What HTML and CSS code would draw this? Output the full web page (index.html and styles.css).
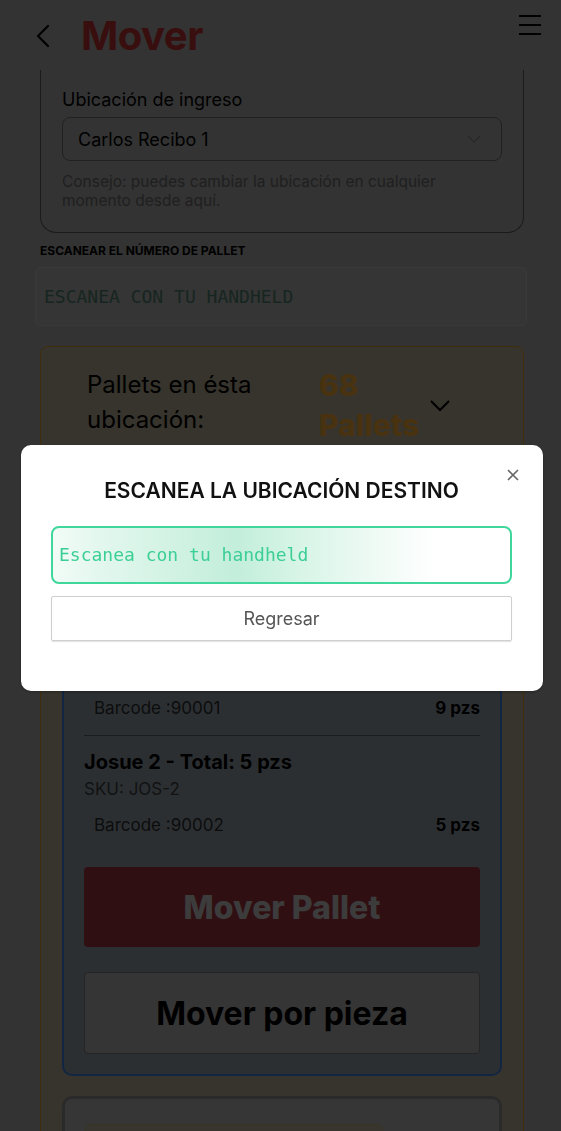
FILE: index.html
```html
<!DOCTYPE html>
<html lang="es">
<head>
  <meta charset="UTF-8" />
  <meta name="viewport" content="width=device-width, initial-scale=1" />
  <title>Mover</title>
  <link rel="stylesheet" href="styles.css">
</head>
<body>
  <header class="topbar">
    <button class="back" aria-label="Regresar">
      <svg width="16" height="24" viewBox="0 0 16 24"><path d="M13 2 L3 12 L13 22" fill="none" stroke="#000" stroke-width="2.2" stroke-linecap="round" stroke-linejoin="round"/></svg>
    </button>
    <h1>Mover</h1>
    <button class="menu" aria-label="Menú">
      <span></span><span></span><span></span>
    </button>
  </header>

  <main class="page">
    <section class="card location">
      <label class="field-label">Ubicación de ingreso</label>
      <div class="select">
        <span>Carlos Recibo 1</span>
        <svg width="14" height="8" viewBox="0 0 14 8"><path d="M1 1 L7 7 L13 1" fill="none" stroke="#888" stroke-width="1.4"/></svg>
      </div>
      <p class="hint">Consejo: puedes cambiar la ubicación en cualquier momento desde aquí.</p>
    </section>

    <div class="scan">
      <div class="scan-label">ESCANEAR EL NÚMERO DE PALLET</div>
      <div class="scan-input">ESCANEA CON TU HANDHELD</div>
    </div>

    <section class="card pallets">
      <div class="pallets-head">
        <div class="pallets-title">Pallets en ésta ubicación:</div>
        <div class="pallets-count">68 Pallets</div>
        <svg class="chev" width="20" height="12" viewBox="0 0 20 12"><path d="M1 1 L10 10 L19 1" fill="none" stroke="#000" stroke-width="2"/></svg>
      </div>

      <div class="pallet open">
        <div class="pallet-head">
          <div class="pallet-name">Pallet PLT-00001</div>
          <div class="pallet-meta">2 productos · 14 pzs</div>
          <div class="pallet-meta">Ubicación: Carlos Recibo 1</div>
        </div>

        <div class="product">
          <div class="product-name">Josue 1 - Total: 9 pzs</div>
          <div class="sku">SKU: JOS-1</div>
          <div class="barcode"><span>Barcode :90001</span><b>9 pzs</b></div>
        </div>
        <div class="product">
          <div class="product-name">Josue 2 - Total: 5 pzs</div>
          <div class="sku">SKU: JOS-2</div>
          <div class="barcode"><span>Barcode :90002</span><b>5 pzs</b></div>
        </div>

        <button class="btn-move">Mover Pallet</button>
        <button class="btn-piece">Mover por pieza</button>
      </div>

      <div class="pallet closed">
        <div class="tag"></div>
      </div>
    </section>
  </main>

  <div class="overlay">
    <div class="modal">
      <button class="close" aria-label="Cerrar">
        <svg width="12" height="12" viewBox="0 0 12 12"><path d="M1 1 L11 11 M11 1 L1 11" stroke="#666" stroke-width="1.6"/></svg>
      </button>
      <h2>ESCANEA LA UBICACIÓN DESTINO</h2>
      <div class="modal-input">Escanea con tu handheld</div>
      <button class="btn-back">Regresar</button>
    </div>
  </div>
</body>
</html>
```

FILE: styles.css
```css
body {
  font-family: Inter, "Noto Sans", sans-serif;
  background: #ababab;
  color: #000;
  margin: 0;
  height: 1131px;
  overflow: hidden;
}
button {
  font-family: inherit;
  background: none;
  border: none;
  padding: 0;
  cursor: pointer;
}

.topbar {
  display: flex;
  align-items: center;
  height: 70px;
  padding: 0 20px 0 35px;
}
.topbar .back {
  display: flex;
  margin-top: 2px;
}
.topbar h1 {
  margin: 0 0 0 30px;
  font-size: 40px;
  font-weight: 700;
  color: #c03030;
  letter-spacing: -0.5px;
}
.menu {
  margin-left: auto;
  align-self: flex-start;
  margin-top: 15px;
  display: flex;
  flex-direction: column;
  gap: 7px;
}
.menu span {
  display: block;
  width: 22px;
  height: 2px;
  background: #000;
}

.page {
  padding: 0 37px 0 40px;
}
.card {
  border: 1px solid #5a5a5a;
  border-radius: 16px;
}
.location {
  border-top: none;
  border-radius: 0 0 16px 16px;
  padding: 18px 21px 22px;
}
.field-label {
  display: block;
  font-size: 18px;
  line-height: 24px;
  margin-bottom: 5px;
}
.select {
  display: flex;
  align-items: center;
  justify-content: space-between;
  height: 42px;
  border: 1px solid #6e6e6e;
  border-radius: 8px;
  padding: 0 20px 0 15px;
  font-size: 18px;
}
.hint {
  margin: 11px 0 0;
  padding-right: 30px;
  font-size: 15.5px;
  line-height: 19px;
  color: #6a6a6a;
}

.scan {
  margin: 10px -3px 0 -5px;
}
.scan-label {
  font-size: 12px;
  font-weight: 700;
  padding-left: 5px;
  margin-bottom: 9px;
}
.scan-input {
  height: 57px;
  border: 1px solid #bcc4c1;
  border-radius: 6px;
  background: #aeb2b0;
  font-family: "DejaVu Sans Mono", monospace;
  font-size: 18px;
  line-height: 57px;
  padding-left: 8px;
  color: #4f7d6e;
}

.pallets {
  margin-top: 20px;
  background: #b6ad93;
  border-color: #d6982a;
  border-radius: 8px;
  padding: 0 21px;
}
.pallets-head {
  display: flex;
  align-items: flex-start;
  padding: 20px 52px 17px 25px;
}
.pallets-title {
  width: 232px;
  font-size: 24px;
  line-height: 35px;
}
.pallets-count {
  width: 110px;
  margin-top: -2px;
  font-size: 30px;
  line-height: 40px;
  font-weight: 800;
  color: #f0a838;
}
.chev {
  margin-left: auto;
  margin-top: 33px;
}

.pallet {
  border-radius: 10px;
  padding: 0 20px;
}
.pallet.open {
  background: #939fa9;
  border: 2px solid #3d7fe0;
  padding-bottom: 20px;
}
.pallet-head {
  padding: 22px 0 53px;
}
.pallet-name {
  font-size: 20px;
  font-weight: 700;
  line-height: 28px;
}
.pallet-meta {
  font-size: 17px;
  line-height: 26px;
}
.product {
  padding: 12px 0 4px;
}
.product + .product {
  border-top: 1px solid #5a5f63;
}
.product-name {
  font-size: 20px;
  font-weight: 700;
  line-height: 28px;
}
.sku {
  font-size: 17px;
  line-height: 26px;
  color: #3a3d40;
}
.barcode {
  display: flex;
  justify-content: space-between;
  padding: 10px 0 10px 10px;
  font-size: 17px;
  line-height: 26px;
  color: #2a2c2e;
}
.barcode b {
  color: #000;
}
.btn-move {
  display: block;
  width: 100%;
  height: 80px;
  margin-top: 15px;
  background: #a2333f;
  border-radius: 4px;
  color: #c8c8c8;
  font-size: 32px;
  font-weight: 800;
}
.btn-piece {
  display: block;
  width: 100%;
  height: 82px;
  margin-top: 25px;
  background: #b2b2b2;
  border: 1px solid #7a7a7a;
  border-radius: 4px;
  color: #000;
  font-size: 32px;
  font-weight: 700;
}
.pallet.closed {
  margin-top: 20px;
  background: #b4b4b4;
  border: 3px solid #8e8e8e;
  padding-top: 25px;
  height: 80px;
}
.tag {
  width: 296px;
  height: 40px;
  border: 1px solid #b9b07a;
  border-radius: 6px;
  background: #b9b39c;
}

.overlay {
  position: fixed;
  inset: 0;
  background: rgba(0, 0, 0, 0.7);
  display: flex;
  align-items: center;
  justify-content: center;
  padding: 4px 18px 0 21px;
}
.modal {
  position: relative;
  flex: 1;
  background: #fff;
  border-radius: 10px;
  padding: 33px 31px 50px 30px;
  box-shadow: 0 1px 3px rgba(0, 0, 0, 0.3);
}
.modal h2 {
  margin: 0 0 22px;
  text-align: center;
  font-size: 21px;
  line-height: 26px;
  font-weight: 600;
  color: #111;
}
.close {
  position: absolute;
  top: 24px;
  right: 24px;
  display: flex;
}
.modal-input {
  height: 54px;
  border: 2px solid #40d79c;
  border-radius: 8px;
  background: linear-gradient(90deg, #f2fcf7 0%, #e3f7ee 10%, #c3eedb 40%, #d9f5e8 55%, #eefaf4 70%, #ffffff 84%);
  font-family: "DejaVu Sans Mono", monospace;
  font-size: 18px;
  line-height: 54px;
  padding-left: 6px;
  color: #3ccf95;
}
.btn-back {
  display: block;
  width: 100%;
  height: 45px;
  margin-top: 12px;
  border: 1px solid #cfcfcf;
  border-radius: 2px;
  box-shadow: 0 1px 1px rgba(0, 0, 0, 0.12);
  font-size: 18px;
  color: #555;
}
```
